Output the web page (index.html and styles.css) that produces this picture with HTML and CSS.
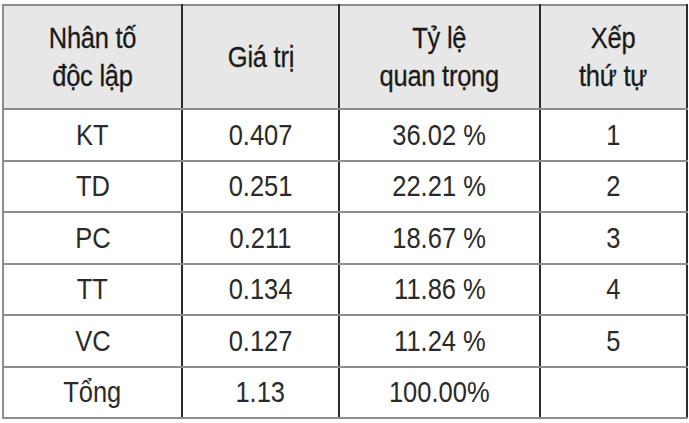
FILE: index.html
```html
<!DOCTYPE html>
<html>
<head>
<meta charset="utf-8">
<link rel="stylesheet" href="styles.css">
</head>
<body>
<div class="page">
<table class="tbl">
  <colgroup>
    <col class="c1"><col class="c2"><col class="c3"><col class="c4">
  </colgroup>
  <thead>
    <tr>
      <th><span class="t">Nhân tố<br>độc lập</span></th>
      <th><span class="t">Giá trị</span></th>
      <th><span class="t">Tỷ lệ<br>quan trọng</span></th>
      <th><span class="t">Xếp<br>thứ tự</span></th>
    </tr>
  </thead>
  <tbody>
    <tr><td><span class="t">KT</span></td><td><span class="t">0.407</span></td><td><span class="t">36.02 %</span></td><td><span class="t">1</span></td></tr>
    <tr><td><span class="t">TD</span></td><td><span class="t">0.251</span></td><td><span class="t">22.21 %</span></td><td><span class="t">2</span></td></tr>
    <tr><td><span class="t">PC</span></td><td><span class="t">0.211</span></td><td><span class="t">18.67 %</span></td><td><span class="t">3</span></td></tr>
    <tr><td><span class="t">TT</span></td><td><span class="t">0.134</span></td><td><span class="t">11.86 %</span></td><td><span class="t">4</span></td></tr>
    <tr><td><span class="t">VC</span></td><td><span class="t">0.127</span></td><td><span class="t">11.24 %</span></td><td><span class="t">5</span></td></tr>
    <tr><td><span class="t">Tổng</span></td><td><span class="t">1.13</span></td><td><span class="t">100.00%</span></td><td></td></tr>
  </tbody>
</table>
</div>
</body>
</html>
```
FILE: styles.css
```css
html, body {
  margin: 0;
  padding: 0;
  background: #ffffff;
}
.page {
  padding: 4px 3px 0 2px;
}
.tbl {
  border-collapse: collapse;
  table-layout: fixed;
  width: 684px;
  font-family: "Liberation Sans", Arial, sans-serif;
  color: #2a2a2a;
}
.c1 { width: 179px; }
.c2 { width: 157px; }
.c3 { width: 201px; }
.c4 { width: 147px; }
.tbl th, .tbl td {
  border-top: 2px solid #8c8c8c;
  border-bottom: 2px solid #8c8c8c;
  border-left: 2px solid #2b2b2b;
  border-right: 2px solid #2b2b2b;
  text-align: center;
  padding: 0;
}
.tbl th:first-child, .tbl td:first-child {
  border-left-color: #8c8c8c;
}
.t {
  display: inline-block;
  transform: scaleX(0.85);
  white-space: nowrap;
}
.tbl th {
  background: #e7e7e7;
  height: 102px;
  font-weight: normal;
  font-size: 30px;
  line-height: 38px;
  letter-spacing: -0.3px;
  color: #1a1a1a;
  -webkit-text-stroke: 0.3px #1a1a1a;
}
.tbl td {
  height: 49.5px;
  font-size: 30px;
  line-height: 36px;
  color: #2a2a2a;
}
```
